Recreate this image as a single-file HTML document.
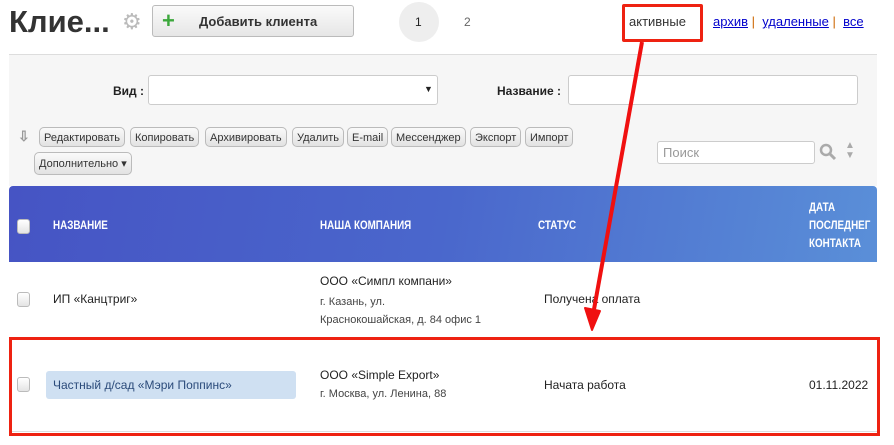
<!DOCTYPE html><html><head><meta charset="utf-8"><style>
body{margin:0;width:894px;height:445px;background:#fff;font-family:"Liberation Sans",sans-serif;position:relative;overflow:hidden;color:#222}
.a{position:absolute;white-space:nowrap}
.btn{position:absolute;height:20px;border:1px solid #bbb;border-radius:5px;background:linear-gradient(#fafafa,#e2e2e2);font-size:11px;line-height:20px;padding:0 4px;color:#333;box-sizing:border-box}
.cb{position:absolute;width:11px;height:13px;border:1px solid #bbb;border-radius:3px;background:linear-gradient(#fff,#e4e4e4)}
.h{color:#fff;font-weight:bold;font-size:12px;transform:scaleX(.82);transform-origin:left}
</style></head><body>
<div class="a" style="left:9px;top:4px;font-size:31px;font-weight:bold;color:#333">Клие...</div>
<div class="a" style="left:122px;top:9px;font-size:22px;color:#bbb">⚙</div>
<div class="a" style="left:152px;top:5px;width:202px;height:32px;border:1px solid #bbb;border-radius:3px;background:linear-gradient(#fafafa,#e6e6e6);box-sizing:border-box"></div>
<div class="a" style="left:162px;top:8px;font-size:22px;font-weight:bold;color:#3ca83c">+</div>
<div class="a" style="left:199px;top:14px;font-size:13px;font-weight:bold;color:#333">Добавить клиента</div>
<div class="a" style="left:399px;top:2px;width:40px;height:40px;border-radius:50%;background:#eee"></div>
<div class="a" style="left:415px;top:15px;font-size:12px">1</div>
<div class="a" style="left:464px;top:15px;font-size:12px;color:#666">2</div>
<div class="a" style="left:622px;top:4px;width:81px;height:38px;border:3px solid #e21;border-radius:2px;box-sizing:border-box"></div>
<div class="a" style="left:629px;top:14px;font-size:13px;color:#333">активные</div>
<div class="a" style="left:713px;top:14px;font-size:13px;color:#00c"><u>архив</u> <span style="color:#c60">|</span> &nbsp;<u>удаленные</u> <span style="color:#c60">|</span> &nbsp;<u>все</u></div>
<div class="a" style="left:9px;top:54px;width:868px;height:1px;background:#ddd"></div>
<div class="a" style="left:9px;top:55px;width:868px;height:131px;background:#f6f6f6"></div>
<div class="a" style="left:113px;top:84px;font-size:12px;font-weight:bold">Вид :</div>
<div class="a" style="left:148px;top:75px;width:290px;height:30px;border:1px solid #ccc;border-radius:3px;background:#fff;box-sizing:border-box"></div>
<div class="a" style="left:424px;top:84px;font-size:9px">▼</div>
<div class="a" style="left:497px;top:84px;font-size:12px;font-weight:bold">Название :</div>
<div class="a" style="left:568px;top:75px;width:290px;height:30px;border:1px solid #ccc;border-radius:3px;background:#fff;box-sizing:border-box"></div>
<div class="a" style="left:18px;top:128px;font-size:14px;color:#999;font-weight:bold">⇩</div>
<div class="btn" style="left:39px;top:127px">Редактировать</div>
<div class="btn" style="left:130px;top:127px">Копировать</div>
<div class="btn" style="left:205px;top:127px">Архивировать</div>
<div class="btn" style="left:292px;top:127px">Удалить</div>
<div class="btn" style="left:347px;top:127px">E-mail</div>
<div class="btn" style="left:391px;top:127px">Мессенджер</div>
<div class="btn" style="left:470px;top:127px">Экспорт</div>
<div class="btn" style="left:525px;top:127px">Импорт</div>
<div class="btn" style="left:34px;top:152px;height:23px;line-height:23px">Дополнительно ▾</div>
<div class="a" style="left:657px;top:141px;width:158px;height:23px;border:1px solid #ccc;border-radius:3px;background:#fff;box-sizing:border-box;font-size:13px;color:#999;padding:3px 5px">Поиск</div>
<svg class="a" style="left:819px;top:143px" width="18" height="18"><circle cx="7" cy="7" r="5" fill="none" stroke="#aaa" stroke-width="2.5"/><line x1="11" y1="11" x2="16" y2="16" stroke="#aaa" stroke-width="3"/></svg>
<div class="a" style="left:845px;top:141px;font-size:10px;color:#aaa;line-height:10px">▲<br>▼</div>
<div class="a" style="left:9px;top:186px;width:868px;height:76px;background:linear-gradient(100deg,#4654c4,#4a67cc 50%,#5a8fd8);border-radius:4px 4px 0 0"></div>
<div class="cb" style="left:17px;top:219px"></div>
<div class="a h" style="left:53px;top:218px">НАЗВАНИЕ</div>
<div class="a h" style="left:320px;top:218px">НАША КОМПАНИЯ</div>
<div class="a h" style="left:538px;top:218px">СТАТУС</div>
<div class="a h" style="left:809px;top:198px;line-height:18px">ДАТА<br>ПОСЛЕДНЕГ<br>КОНТАКТА</div>
<div class="cb" style="left:17px;top:292px"></div>
<div class="a" style="left:53px;top:292px;font-size:12px">ИП «Канцтриг»</div>
<div class="a" style="left:320px;top:274px;font-size:12px">ООО «Симпл компани»</div>
<div class="a" style="left:320px;top:293px;font-size:11px;color:#444;line-height:18px">г. Казань, ул.<br>Краснокошайская, д. 84 офис 1</div>
<div class="a" style="left:544px;top:292px;font-size:12px">Получена оплата</div>
<div class="a" style="left:9px;top:337px;width:871px;height:99px;border:3px solid #e21;box-sizing:border-box"></div>
<div class="a" style="left:12px;top:431px;width:865px;height:1px;background:#ddd"></div>
<div class="cb" style="left:17px;top:377px"></div>
<div class="a" style="left:46px;top:371px;width:250px;height:28px;background:#cfe0f2;border-radius:3px"></div>
<div class="a" style="left:53px;top:378px;font-size:12px;color:#2a4a7a">Частный д/сад «Мэри Поппинс»</div>
<div class="a" style="left:320px;top:368px;font-size:12px">ООО «Simple Export»</div>
<div class="a" style="left:320px;top:388px;font-size:11px;color:#444">г. Москва, ул. Ленина, 88</div>
<div class="a" style="left:544px;top:378px;font-size:12px">Начата работа</div>
<div class="a" style="left:809px;top:378px;font-size:12px">01.11.2022</div>
<svg class="a" style="left:0;top:0" width="894" height="445"><line x1="642" y1="42" x2="593" y2="315" stroke="#f01010" stroke-width="4"/><path d="M585 308 L592 330 L600 311 Z" fill="#f01010" stroke="#f01010" stroke-width="2" stroke-linejoin="round"/></svg>
</body></html>
